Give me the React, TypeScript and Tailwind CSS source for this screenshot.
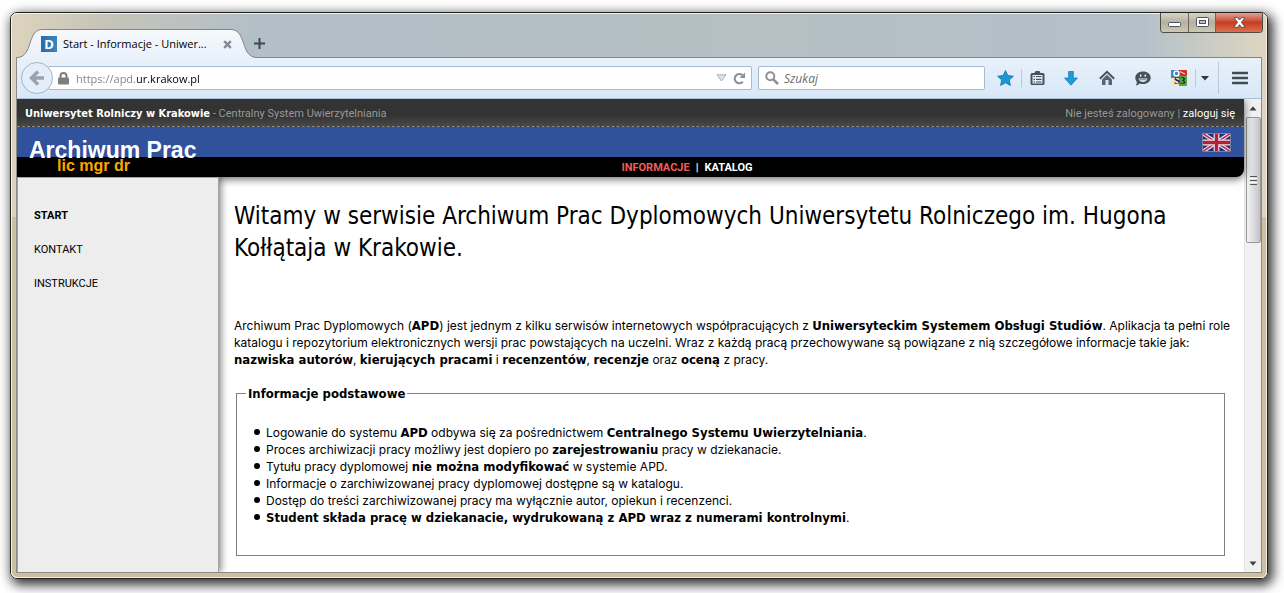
import React from "react";

const toolIcon = "flex h-8 shrink-0 items-center justify-center text-[#47515b]";

function TitleBar() {
  return (
    <div className="flex h-[43px] items-start pl-[5px] pr-[3px]">
      <div className="relative mt-[15px] flex h-7 w-60 items-center pl-6 pr-[25px] pt-[2px]">
        <svg className="absolute left-0 top-0" width="240" height="30" viewBox="0 0 240 30" aria-hidden="true">
          <defs>
            <linearGradient id="tab" x1="0" y1="0" x2="0" y2="1">
              <stop offset="0" stopColor="#f7f9fb" />
              <stop offset="1" stopColor="#e9f1fb" />
            </linearGradient>
          </defs>
          <path d="M0 30V28.500C16 28.500 10 .5 25 .5H214C230 .5 223 28.500 240 28.500V30Z" fill="url(#tab)" />
          <path d="M0 28.500C16 28.500 10 .5 25 .5H214C230 .5 223 28.500 240 28.500" fill="none" stroke="#7f868c" />
        </svg>
        <span className="relative flex h-4 w-4 shrink-0 items-center justify-center bg-gradient-to-r from-[#2a6ca8] to-[#3f83bb] font-['Open_Sans',sans-serif] text-[13px] font-bold leading-4 text-white">
          D
        </span>
        <span className="relative ml-[6px] grow whitespace-nowrap font-['Open_Sans','Noto_Sans',sans-serif] text-[11px] leading-4 text-black">
          Start - Informacje - Uniwer...
        </span>
        <button aria-label="Zamknij kartę" className="relative">
          <svg width="9" height="9" viewBox="0 0 9 9">
            <path d="M1.200 1.200L7.800 7.800M7.800 1.200L1.200 7.800" stroke="#848b94" strokeWidth="2.400" />
          </svg>
        </button>
      </div>
      <button aria-label="Nowa karta" className="-ml-[3px] mt-6">
        <svg width="11" height="11" viewBox="0 0 11 11">
          <path d="M5.500 0V11M0 5.500H11" stroke="#3d4852" strokeWidth="2" />
        </svg>
      </button>
      <div className="-mt-px ml-auto flex h-5 overflow-hidden rounded-b-[4px] border border-t-0 border-[#4f4c46]">
        <button aria-label="Minimalizuj" className="flex w-7 items-center justify-center border-r border-[#6a665c] bg-gradient-to-b from-[#d8d5c8] via-[#b5b09f] to-[#cdc8b4]">
          <svg width="13" height="13" viewBox="0 0 13 13">
            <rect x=".5" y="6.500" width="12" height="4" rx="1" fill="#fff" stroke="#4c5260" />
          </svg>
        </button>
        <button aria-label="Maksymalizuj" className="flex w-[27px] items-center justify-center border-r border-[#6a665c] bg-gradient-to-b from-[#d8d5c8] via-[#b5b09f] to-[#cdc8b4]">
          <svg width="13" height="11" viewBox="0 0 13 11">
            <rect x=".5" y=".5" width="12" height="9" rx="1" fill="#fff" stroke="#4c5260" />
            <rect x="3.500" y="3.500" width="6" height="3" fill="#c4c0ae" stroke="#4c5260" />
          </svg>
        </button>
        <button aria-label="Zamknij" className="flex w-[46px] items-center justify-center bg-gradient-to-b from-[#e2a193] via-[#c63c22] to-[#d9704e]">
          <svg width="13" height="11" viewBox="0 0 13 11">
            <path d="M1 .7H4.500L6.500 3L8.500 .7H12L8.400 5.300L12.200 10.300H8.500L6.500 7.700L4.500 10.300H.8L4.600 5.300Z" fill="#fff" stroke="#5a4a52" strokeWidth=".9" />
          </svg>
        </button>
      </div>
    </div>
  );
}

function ToolBar() {
  return (
    <div className="flex h-[42px] items-center border-b border-t border-b-[#a9c0d8] border-t-[#7f868c] bg-gradient-to-b from-[#e9f1fa] to-[#d8e7f8] pl-1">
      <button aria-label="Wstecz" className="z-10 flex h-8 w-8 shrink-0 items-center justify-center rounded-full border border-[#a3b6c9] bg-[#e4eefa]">
        <svg width="16" height="16" viewBox="0 0 16 16">
          <path d="M9 1.500L2.500 8L9 14.500M3 8H15" fill="none" stroke="#9ba2aa" strokeWidth="3.400" />
        </svg>
      </button>
      <div className="-ml-[5px] flex h-6 min-w-0 grow items-center rounded-[2px] border border-[#a6bbd2] bg-white pl-[9px] pr-[5px]">
        <svg className="shrink-0" width="11" height="13" viewBox="0 0 11 13" aria-hidden="true">
          <path d="M2.500 6V4A3 3 0 0 1 8.500 4V6" fill="none" stroke="#7e7e7e" strokeWidth="2" />
          <rect x="0" y="5.500" width="11" height="7" rx="1" fill="#7e7e7e" />
        </svg>
        <input
          aria-label="Adres strony"
          defaultValue="https://apd.ur.krakow.pl"
          className="ml-[7px] min-w-0 grow bg-[linear-gradient(90deg,#808080_61px,#000_61px)] bg-clip-text pt-px font-['Open_Sans','Noto_Sans',sans-serif] text-[11px] leading-5 text-transparent outline-none"
        />
        <svg className="mr-[6px] shrink-0" width="11" height="8" viewBox="0 0 11 8" aria-hidden="true">
          <path d="M1 .8H10L5.500 7Z" fill="#dfe5ea" stroke="#a9b2bb" />
        </svg>
        <button aria-label="Odśwież" className="shrink-0">
          <svg width="13" height="13" viewBox="0 0 13 13">
            <path d="M9.800 9.700A4.600 4.600 0 1 1 9.300 3.100" fill="none" stroke="#8492a0" strokeWidth="2.200" />
            <path d="M12 .5V6H6.500Z" fill="#8492a0" />
          </svg>
        </button>
      </div>
      <div className="ml-[6px] flex h-6 w-[227px] shrink-0 items-center rounded-[2px] border border-[#a6bbd2] bg-white pl-[6px]">
        <svg className="shrink-0" width="14" height="14" viewBox="0 0 14 14" aria-hidden="true">
          <circle cx="5.300" cy="5.300" r="4" fill="none" stroke="#909090" strokeWidth="2" />
          <path d="M8.300 8.300L13 13" stroke="#909090" strokeWidth="2.600" />
        </svg>
        <input
          aria-label="Szukaj"
          placeholder="Szukaj"
          className="ml-[5px] min-w-0 grow bg-transparent pt-px font-['Open_Sans','Noto_Sans',sans-serif] text-xs italic outline-none placeholder:text-[#6d6d6d]"
        />
      </div>
      <div className="ml-1 flex shrink-0 items-center">
        <button aria-label="Zakładka" className={toolIcon + " w-8"}>
          <svg width="17" height="16" viewBox="0 0 17 16">
            <path d="M8.500 .5L10.900 5.500L16.400 6.200L12.400 10L13.400 15.500L8.500 12.800L3.600 15.500L4.600 10L.6 6.200L6.100 5.500Z" fill="#1a96d5" stroke="#1679b4" strokeWidth=".8" />
          </svg>
        </button>
        <span className="h-[18px] w-px bg-[#b9c9da]" />
        <button aria-label="Lista zakładek" className={toolIcon + " w-[30px]"}>
          <svg width="15" height="16" viewBox="0 0 15 16">
            <path d="M2 3H4.500L5.500 1H9.500L10.500 3H13A1.500 1.500 0 0 1 14.500 4.500V13.500A1.500 1.500 0 0 1 13 15H2A1.500 1.500 0 0 1 .5 13.500V4.500A1.500 1.500 0 0 1 2 3Z" fill="#47515b" />
            <path d="M2.500 5H12.500V13.500H2.500Z" fill="#e3edf8" />
            <path d="M3.500 6.500H5M6 6.500H11.500M3.500 9.300H5M6 9.300H11.500M3.500 12H5M6 12H11.500" stroke="#47515b" strokeWidth="1.200" />
          </svg>
        </button>
        <button aria-label="Pobieranie" className={toolIcon + " w-[38px]"}>
          <svg width="14" height="15" viewBox="0 0 14 15">
            <path d="M4.700 .5H9.300V7H13.400L7 14.200L.6 7H4.700Z" fill="#1e9ddb" stroke="#177ab3" strokeWidth=".8" />
          </svg>
        </button>
        <button aria-label="Strona startowa" className={toolIcon + " w-[34px]"}>
          <svg width="16" height="16" viewBox="0 0 16 16">
            <path d="M.8 8.800L8 1.800L15.200 8.800" fill="none" stroke="#47515b" strokeWidth="2" />
            <path d="M3 9.500L8 4.800L13 9.500V15H9.500V10H6.500V15H3Z" fill="#5a646e" />
          </svg>
        </button>
        <button aria-label="Czat" className={toolIcon + " w-[38px]"}>
          <svg width="16" height="15" viewBox="0 0 16 15">
            <path d="M8 .5C12.400 .5 15.700 3.100 15.700 6.700S12.400 13 8 13C6.800 13 5.700 12.800 4.700 12.400C3.700 13.500 2.300 14.300 .8 14.400C1.700 13.300 2 12 1.800 10.800C.8 9.700 .3 8.300 .3 6.700C.3 3.100 3.600 .5 8 .5Z" fill="#47515b" />
            <path d="M5.700 3.500V5.800M10.300 3.500V5.800" stroke="#e3edf8" strokeWidth="1.500" />
            <path d="M3.500 7.500H12.500C12 9.800 10.300 11 8 11S4 9.800 3.500 7.500Z" fill="#e3edf8" />
            <path d="M4.500 8.700H11.500" stroke="#6a747e" strokeWidth=".8" />
          </svg>
        </button>
        <button aria-label="S3 Tłumacz" className={toolIcon + " w-[33px]"}>
          <svg width="16" height="16" viewBox="0 0 16 16">
            <rect width="9" height="9" fill="#3f86c6" />
            <rect x="8" width="8" height="6" rx="1" fill="#cf2f27" />
            <rect x="7" y="6" width="9" height="10" rx="1" fill="#5aa83a" />
            <rect y="8" width="8" height="8" fill="#ece9c0" />
            <circle cx="5.500" cy="3.500" r="2.500" fill="none" stroke="#fff" strokeWidth="1.500" />
            <path d="M9 1.500L14 4" stroke="#f5c9c5" strokeWidth="1.200" />
            <text x="3" y="14" fontFamily="Liberation Serif, serif" fontSize="11" fontWeight="700" fill="#15235c">S3</text>
          </svg>
        </button>
        <span className="h-[18px] w-px bg-[#b9c9da]" />
        <button aria-label="Więcej" className={toolIcon + " w-[22px] pr-1"}>
          <svg width="8" height="5" viewBox="0 0 8 5">
            <path d="M0 0H8L4 4.500Z" fill="#30363d" />
          </svg>
        </button>
        <button aria-label="Menu" className={toolIcon + " w-[43px] border-l border-[#b9c9da]"}>
          <svg width="16" height="14" viewBox="0 0 16 14">
            <path d="M1 2H15M1 7H15M1 12H15" stroke="#414b55" strokeWidth="2.600" strokeLinecap="round" />
          </svg>
        </button>
      </div>
    </div>
  );
}

function Flag() {
  return (
    <svg width="29" height="19" viewBox="0 0 60 38" preserveAspectRatio="none" className="rounded-[2px]" role="img" aria-label="English">
      <rect width="60" height="38" fill="#1d2f7c" />
      <path d="M0 0L60 38M60 0L0 38" stroke="#e6e6ee" strokeWidth="8" />
      <path d="M0 0L60 38M60 0L0 38" stroke="#c22a44" strokeWidth="3" />
      <path d="M30 0V38M0 19H60" stroke="#e6e6ee" strokeWidth="12" />
      <path d="M30 0V38M0 19H60" stroke="#b81d3c" strokeWidth="7" />
      <rect x="1" y="1" width="58" height="36" rx="3" fill="none" stroke="#7c84a0" strokeWidth="2" />
    </svg>
  );
}

function SiteHeader() {
  return (
    <header className="relative rounded-br-lg bg-black shadow-[0_2px_8px_rgba(0,0,0,0.6)]">
      <div className="flex h-7 items-center justify-between border-b border-dashed border-[#8a8a8a] bg-gradient-to-b from-[#333] from-60% to-[#484848] pl-2 pr-[9px] pt-[2px] font-['Roboto',sans-serif] text-[11px] leading-4 text-[#999]">
        <div>
          <b className="font-['DejaVu_Sans_Condensed','DejaVu_Sans',sans-serif] text-white">Uniwersytet Rolniczy w Krakowie</b>
          {" - "}
          <a href="#cas">Centralny System Uwierzytelniania</a>
        </div>
        <div>
          Nie jesteś zalogowany | <a href="#login" className="text-white">zaloguj się</a>
        </div>
      </div>
      <div className="flex h-[30px] items-start justify-between bg-[#30519c] pl-3 pr-[13px]">
        <div className="z-10 mt-[10px] font-['Liberation_Sans',Arial,sans-serif] font-bold">
          <div className="text-[23px] leading-[26px] text-white">Archiwum Prac</div>
          <div className="-mt-[6px] pl-7 text-base leading-[18px] text-[#ffa500]">lic mgr dr</div>
        </div>
        <a href="#en" className="mt-[6px]"><Flag /></a>
      </div>
      <nav className="flex h-5 items-center justify-center gap-[6px] pl-[113px] pt-[2px] font-['Roboto',sans-serif] text-[11px] font-bold leading-4 text-white">
        <a href="#informacje" className="text-[#f25c58]">INFORMACJE</a>
        <span>|</span>
        <a href="#katalog">KATALOG</a>
      </nav>
    </header>
  );
}

const B = ({ children }: { children: React.ReactNode }) => (
  <b className="font-['DejaVu_Sans_Condensed','DejaVu_Sans',sans-serif] text-[13px] leading-none">{children}</b>
);

const Item = ({ children }: { children: React.ReactNode }) => (
  <li className="flex before:mr-[6px] before:mt-[5px] before:h-[6px] before:w-[6px] before:shrink-0 before:rounded-full before:bg-black before:content-['']">
    <span>{children}</span>
  </li>
);

function Content() {
  return (
    <main className="min-w-0 grow pb-4 pl-[15px] pr-[18px] pt-[23px] font-['Inter',sans-serif] text-xs leading-[17px] text-black">
      <h1 className="font-['DejaVu_Sans_Condensed','DejaVu_Sans',sans-serif] text-2xl leading-8">
        Witamy w serwisie Archiwum Prac Dyplomowych Uniwersytetu Rolniczego im. Hugona Kołłątaja w Krakowie.
      </h1>
      <p className="-mr-[6px] mt-[53px]">
        Archiwum Prac Dyplomowych (<B>APD</B>) jest jednym z kilku serwisów internetowych współpracujących z{" "}
        <B>Uniwersyteckim Systemem Obsługi Studiów</B>. Aplikacja ta pełni role katalogu i repozytorium
        elektronicznych wersji prac powstających na uczelni. Wraz z każdą pracą przechowywane są powiązane z nią
        szczegółowe informacje takie jak: <B>nazwiska autorów</B>, <B>kierujących pracami</B> i <B>recenzentów</B>,{" "}
        <B>recenzje</B> oraz <B>oceną</B> z pracy.
      </p>
      <fieldset className="ml-[2px] mr-px mt-[17px] border border-[#808080] pb-[29px] pl-[17px] pr-2">
        <legend className="-ml-2 px-[2px]">
          <B>Informacje podstawowe</B>
        </legend>
        <ul className="pt-[22px]">
          <Item>Logowanie do systemu <B>APD</B> odbywa się za pośrednictwem <B>Centralnego Systemu Uwierzytelniania</B>.</Item>
          <Item>Proces archiwizacji pracy możliwy jest dopiero po <B>zarejestrowaniu</B> pracy w dziekanacie.</Item>
          <Item>Tytułu pracy dyplomowej <B>nie można modyfikować</B> w systemie APD.</Item>
          <Item>Informacje o zarchiwizowanej pracy dyplomowej dostępne są w katalogu.</Item>
          <Item>Dostęp do treści zarchiwizowanej pracy ma wyłącznie autor, opiekun i recenzenci.</Item>
          <Item><B>Student składa pracę w dziekanacie, wydrukowaną z APD wraz z numerami kontrolnymi</B>.</Item>
        </ul>
      </fieldset>
    </main>
  );
}

function ScrollBar() {
  return (
    <div className="flex w-[17px] shrink-0 flex-col items-center border-l border-[#e4e4e4] bg-[#f0f0f0]" aria-hidden="true">
      <div className="flex h-[18px] items-center">
        <svg width="8" height="5" viewBox="0 0 8 5"><path d="M4 .3L7.500 4.500H.5Z" fill="#404040" /></svg>
      </div>
      <div className="flex h-[126px] w-[15px] flex-col items-center justify-center gap-px rounded-[2px] border border-[#989898] bg-gradient-to-r from-[#f3f3f3] via-[#dcdce0] to-[#c2c2c8]">
        <span className="h-px w-[7px] bg-[#555]" />
        <span className="h-px w-[7px] bg-white" />
        <span className="h-px w-[7px] bg-[#555]" />
        <span className="h-px w-[7px] bg-white" />
        <span className="h-px w-[7px] bg-[#555]" />
      </div>
      <div className="mt-auto flex h-[17px] items-center">
        <svg width="8" height="5" viewBox="0 0 8 5"><path d="M4 4.700L7.500 .5H.5Z" fill="#404040" /></svg>
      </div>
    </div>
  );
}

export default function App() {
  return (
    <div className="flex min-h-screen flex-col bg-white pb-[14px] pl-[10px] pr-4 pt-3">
      <div className="flex grow flex-col rounded-[7px] border border-[#222] shadow-[3px_4px_12px_2px_rgba(0,0,0,0.8)]">
        <div className="flex grow flex-col rounded-[6px] border border-[#f4f0e4] bg-[linear-gradient(90deg,#ddd3bd_0,#c6c4b8_90px,#b3bfc7_240px,#b5bfc4_60%,#b3c0c9_90%,#ddd5c0_100%),linear-gradient(#cbc0a2,#cbc0a2)] bg-[size:100%_203px,100%_100%] bg-no-repeat">
          <TitleBar />
          <div className="mx-1 mb-1 flex grow flex-col border border-t-0 border-[#8b8b83] bg-white">
            <ToolBar />
            <div className="flex grow overflow-hidden">
              <div className="flex min-w-0 grow flex-col">
                <SiteHeader />
                <div className="flex grow">
                  <aside className="z-10 w-[202px] shrink-0 border-l border-r border-t border-[#a3a3a3] bg-[#ededed] pl-4 pt-[29px] shadow-[2px_0_7px_rgba(0,0,0,0.5)] [clip-path:inset(0_-12px_0_0)]">
                    <ul className="flex flex-col gap-[17px] font-['Roboto',sans-serif] text-[11px] leading-[17px] text-black">
                      <li><a href="#start" className="font-bold">START</a></li>
                      <li><a href="#kontakt">KONTAKT</a></li>
                      <li><a href="#instrukcje">INSTRUKCJE</a></li>
                    </ul>
                  </aside>
                  <Content />
                </div>
              </div>
              <ScrollBar />
            </div>
          </div>
        </div>
      </div>
    </div>
  );
}
